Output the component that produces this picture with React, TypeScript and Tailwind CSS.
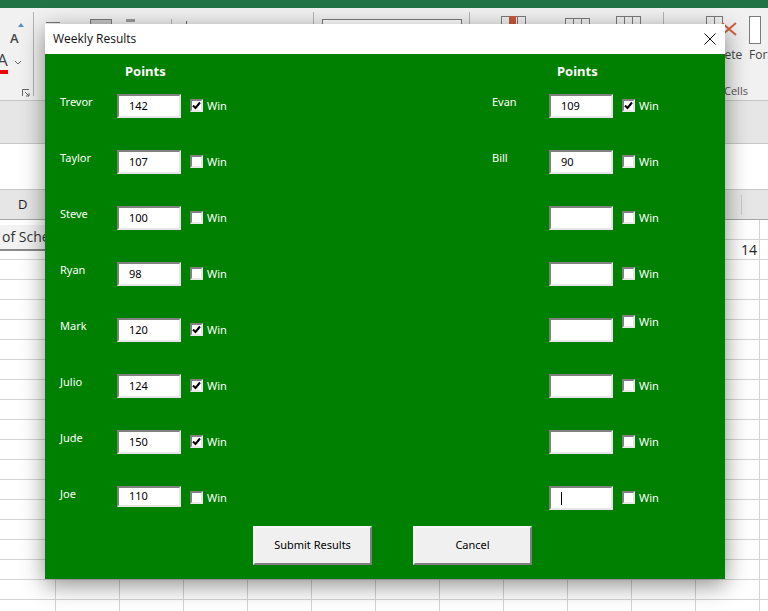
const left = [
  { name: 'Trevor', points: '142', win: true },
  { name: 'Taylor', points: '107', win: false },
  { name: 'Steve', points: '100', win: false },
  { name: 'Ryan', points: '98', win: false },
  { name: 'Mark', points: '120', win: true },
  { name: 'Julio', points: '124', win: true },
  { name: 'Jude', points: '150', win: true },
  { name: 'Joe', points: '110', win: false },
];

const right = [
  { name: 'Evan', points: '109', win: true },
  { name: 'Bill', points: '90', win: false },
  { name: '', points: '', win: false },
  { name: '', points: '', win: false },
  { name: '', points: '', win: false },
  { name: '', points: '', win: false },
  { name: '', points: '', win: false },
  { name: '', points: '', win: false },
];

const rowIds = Array.from({ length: 20 }, (_, i) => i);
const colIds = Array.from({ length: 12 }, (_, i) => i);

function TableIcon({ cols, className }: { cols: number; className?: string }) {
  const w = cols * 8 + 1;
  return (
    <svg width={w} height="28" viewBox={`0 0 ${w} 28`} fill="none" stroke="#7b7b7b" className={className}>
      <rect x="0.5" y="0.5" width={w - 1} height="27" />
      {Array.from({ length: cols - 1 }, (_, i) => (
        <path key={i} d={`M${(i + 1) * 8 + 0.5} 0V28`} />
      ))}
    </svg>
  );
}

function Ribbon() {
  return (
    <div className="flex h-[92px] bg-[#f1f1f1] font-['Open_Sans',sans-serif] text-[#444]">
      <div className="relative w-[33px] shrink-0">
        <span className="absolute left-[10px] top-[21px] text-[13px] font-semibold">A</span>
        <span className="absolute left-[18px] top-[15px] h-0 w-0 border-x-[3px] border-b-[4px] border-x-transparent border-b-[#5b8cc8]" />
        <span className="absolute left-[-3px] top-[42px] border-b-[4px] border-[#f00000] text-[17px] leading-[20px]">A</span>
        <svg width="8" height="5" viewBox="0 0 8 5" className="absolute left-[14px] top-[52px]" fill="none" stroke="#666">
          <path d="M1 1l3 3 3-3" />
        </svg>
        <svg width="8" height="8" viewBox="0 0 8 8" className="absolute left-[22px] top-[81px]" fill="none" stroke="#666">
          <path d="M.5 7V.5H7M3 3l4 4M7 4v3H4" />
        </svg>
      </div>
      <div className="my-1 w-px shrink-0 bg-[#b4b4b4]" />
      <div className="flex w-[279px] shrink-0 items-start pt-[11px]">
        <div className="ml-[12px] mt-[3px] h-px w-[14px] bg-[#7b7b7b]" />
        <div className="ml-[30px] h-[24px] w-[22px] border border-[#7b7b7b] bg-[#c6c6c6]" />
        <div className="ml-[14px] h-[3px] w-[9px] bg-[#9a9a9a]" />
        <div className="ml-[36px] h-[14px] w-px bg-[#b4b4b4]" />
        <div className="ml-[14px] mt-[2px] h-[6px] w-px bg-[#666]" />
      </div>
      <div className="my-1 w-px shrink-0 bg-[#b4b4b4]" />
      <div className="flex w-[155px] shrink-0 items-start pl-[8px] pt-[11px]">
        <div className="h-[24px] w-[140px] border border-[#7b7b7b] bg-white" />
      </div>
      <div className="my-1 w-px shrink-0 bg-[#b4b4b4]" />
      <div className="flex w-[193px] shrink-0 items-start pt-[8px]">
        <div className="relative ml-[31px]">
          <TableIcon cols={3} />
          <div className="absolute left-[8px] top-0 h-[8px] w-[7px] bg-[#c9583a]" />
        </div>
        <TableIcon cols={3} className="ml-[39px] mt-[2px]" />
        <div className="relative ml-[26px]">
          <TableIcon cols={3} />
          <div className="absolute left-[8px] top-[8px] h-[8px] w-[16px] bg-[#a9c1dc]" />
        </div>
      </div>
      <div className="my-1 w-px shrink-0 bg-[#b4b4b4]" />
      <div className="flex min-w-0 flex-1 flex-col overflow-hidden">
        <div className="flex h-[75px] items-start">
          <TableIcon cols={2} className="ml-[16px] mt-[8px]" />
          <div className="relative ml-[26px] mt-[8px] w-[44px] shrink-0">
            <TableIcon cols={2} />
            <svg width="16" height="14" viewBox="0 0 16 14" className="absolute left-[15px] top-[6px]" fill="none" stroke="#d2603f" strokeWidth="2">
              <path d="M1 1l14 12M15 1L1 13" />
            </svg>
            <div className="mt-[3px] text-[12px] leading-[16px] whitespace-nowrap">Delete</div>
            <svg width="8" height="5" viewBox="0 0 8 5" className="ml-[10px] mt-[3px]" fill="none" stroke="#666">
              <path d="M1 1l3 3 3-3" />
            </svg>
          </div>
          <div className="ml-[-1px] mt-[8px] shrink-0">
            <div className="h-[28px] w-[12px] border border-[#7b7b7b] bg-white" />
            <div className="mt-[3px] text-[12px] leading-[16px]">Format</div>
          </div>
        </div>
        <div className="ml-[60px] text-[11px] leading-[16px] text-[#555]">Cells</div>
      </div>
    </div>
  );
}

function Sheet() {
  return (
    <div className="relative">
      {rowIds.map((r) => (
        <div key={r} className="flex h-5 border-b border-[#d4d4d4]">
          <div className="w-[56px] shrink-0 border-r border-[#d4d4d4]" />
          {colIds.map((c) => (
            <div key={c} className="flex w-16 shrink-0 items-center justify-end border-r border-[#d4d4d4] pr-[2px] font-['Open_Sans',sans-serif] text-[14px] text-[#222]">
              {r === 1 && c === 10 ? '14' : ''}
            </div>
          ))}
        </div>
      ))}
      {/* selected cell peeking out from behind the dialog */}
      <div className="absolute left-0 top-[5px] h-[26px] w-[60px] border-b-2 border-[#8a8a8a] bg-[#f2f2f2] pl-[2px] font-['Open_Sans',sans-serif] text-[14px] leading-[24px] whitespace-nowrap text-[#333]">
        of Sche
      </div>
    </div>
  );
}

function Check() {
  return (
    <svg width="9" height="9" viewBox="0 0 9 9" fill="none" stroke="#000" strokeWidth="2">
      <path d="M1 4.5l2.5 2.5L8 1.5" />
    </svg>
  );
}

function Row({ name, points, win, index, caret, lifted }: { name: string; points: string; win: boolean; index: number; caret?: boolean; lifted?: boolean }) {
  const last = index === 7;
  return (
    <div className={last ? 'flex h-[40px] items-start' : 'flex h-[56px] items-start'}>
      <div className="w-[57px] shrink-0 pt-[1px] text-[11px] leading-[14px] text-white">{name}</div>
      <div className={`flex w-16 shrink-0 items-center border-2 border-b-[#e6e6e6] border-l-[#808080] border-r-[#e6e6e6] border-t-[#808080] bg-white pl-[10px] text-[11px] text-black ${last && !caret ? 'h-[21px]' : 'h-[24px]'}`}>
        {points}
        {caret && <span className="h-[13px] w-px bg-black" />}
      </div>
      <div className={lifted ? 'ml-[9px] mt-[-3px] flex items-center gap-[4px]' : 'ml-[9px] mt-[5px] flex items-center gap-[4px]'}>
        <div className="flex h-[13px] w-[13px] items-center justify-center border-2 border-b-[#e6e6e6] border-l-[#808080] border-r-[#e6e6e6] border-t-[#808080] bg-white">
          {win && <Check />}
        </div>
        <span className="text-[11px] leading-[13px] text-white">Win</span>
      </div>
    </div>
  );
}

function Dialog() {
  return (
    <div className="absolute left-[45px] top-[24px] w-[680px] font-['Noto_Sans',sans-serif] shadow-[0_6px_22px_rgba(0,0,0,0.45)]">
      <div className="flex h-[30px] items-center justify-between bg-white pl-2 pr-[9px] font-['Open_Sans',sans-serif] text-[12px] text-[#111]">
        <span>Weekly Results</span>
        <svg width="12" height="12" viewBox="0 0 12 12" fill="none" stroke="#111" strokeWidth="1">
          <path d="M.5.5l11 11M11.5.5l-11 11" />
        </svg>
      </div>
      <div className="bg-[#008000] pb-[14px]">
        <div className="grid grid-cols-[432px_1fr] pl-[15px]">
          {[left, right].map((col, c) => (
            <div key={c}>
              <div className="h-[40px] pl-[65px] pt-[8px] text-[13px] leading-[18px] font-bold text-white">Points</div>
              {col.map((p, i) => (
                <Row key={i} {...p} index={i} caret={c === 1 && i === 7} lifted={c === 1 && i === 4} />
              ))}
            </div>
          ))}
        </div>
        <div className="flex gap-[41px] pl-[208px]">
          {['Submit Results', 'Cancel'].map((label) => (
            <button key={label} className="h-[39px] w-[119px] border-2 border-b-[#808080] border-l-[#f8f8f8] border-r-[#808080] border-t-[#f8f8f8] bg-[#f0f0f0] text-[11px] text-black">
              {label}
            </button>
          ))}
        </div>
      </div>
    </div>
  );
}

export default function App() {
  return (
    <div className="relative h-[611px] w-full overflow-hidden bg-white">
      <div className="h-2 bg-[#217346]" />
      <Ribbon />
      <div className="h-[44px] border-y border-[#c8c8c8] bg-[#e6e6e6]" />
      <div className="h-[45px] bg-white" />
      <div className="flex h-[31px] items-center border-y border-b-[#a6a6a6] border-t-[#c8c8c8] bg-[#e6e6e6] font-['Open_Sans',sans-serif] text-[13px] text-[#222]">
        <span className="pl-[18px]">D</span>
        <span className="ml-[686px]">O</span>
        <span className="ml-[17px] h-[20px] w-px bg-[#c8c8c8]" />
      </div>
      <Sheet />
      <Dialog />
    </div>
  );
}
